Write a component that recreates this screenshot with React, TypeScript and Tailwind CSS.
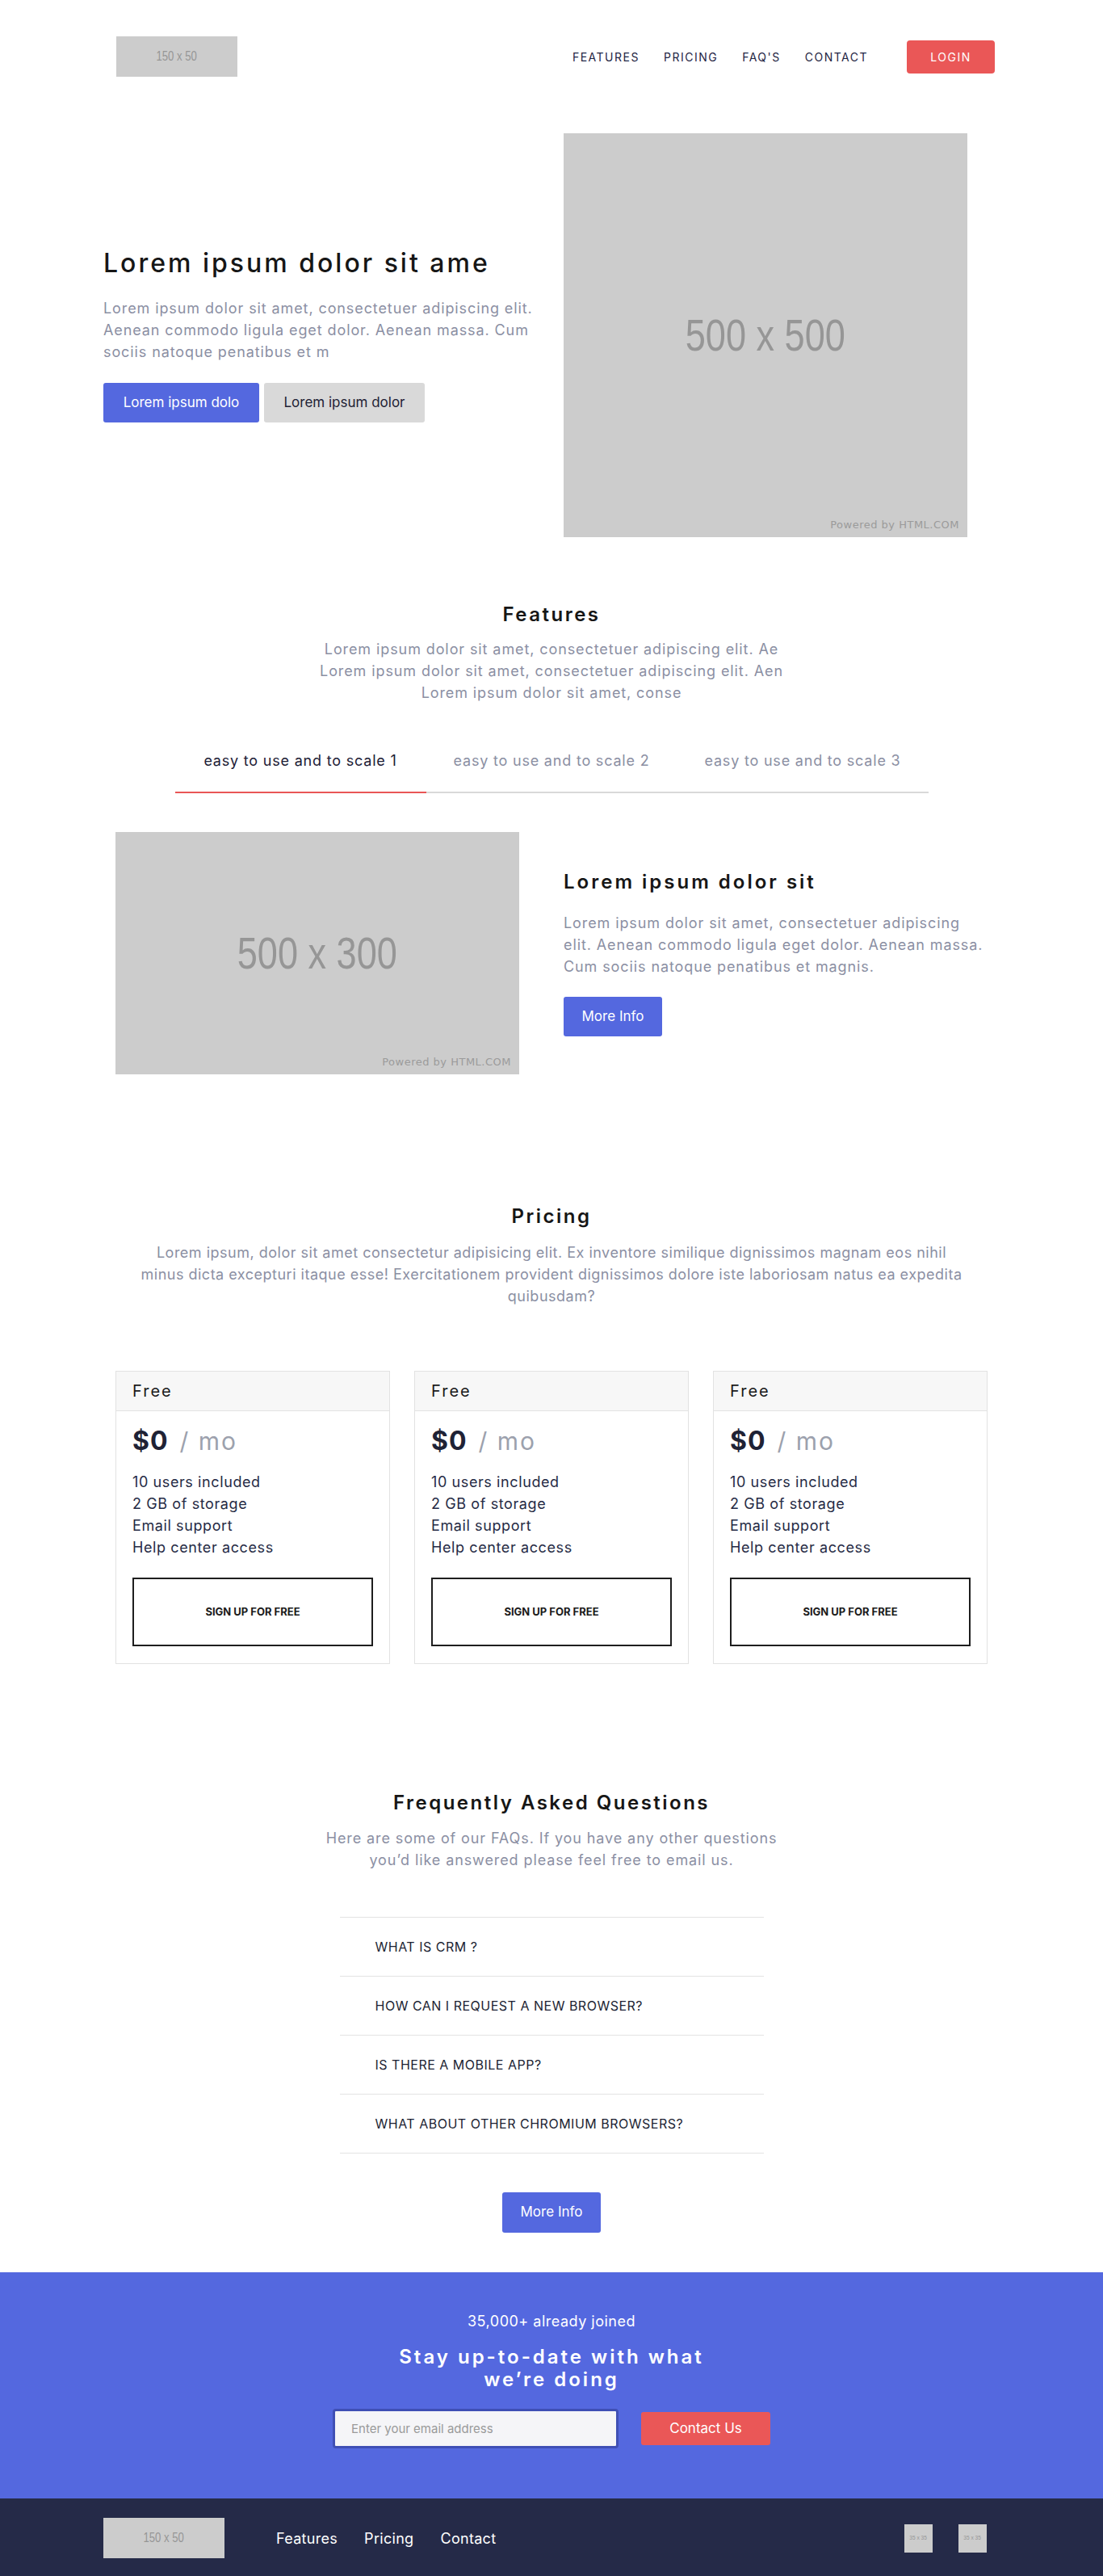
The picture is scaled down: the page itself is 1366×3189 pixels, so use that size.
import React from "react";

const Ph = ({ className, label, big, powered }: { className: string; label: string; big?: string; powered?: boolean }) => (
  <div className={`relative bg-[#cccccc] flex items-center justify-center text-[#969696] font-['Liberation_Sans',Arial,sans-serif] shrink-0 ${className}`}>
    <span className={`inline-block scale-x-[0.82] ${big}`}>{label}</span>
    {powered && (
      <span className="absolute right-[10px] bottom-[6px] text-[13px] tracking-[0.5px] text-[#9b9b9b] font-['DejaVu_Sans',sans-serif]">Powered by HTML.COM</span>
    )}
  </div>
);

export default function App() {
  const tabs = ["easy to use and to scale 1", "easy to use and to scale 2", "easy to use and to scale 3"];
  const faqs = ["WHAT IS CRM ?", "HOW CAN I REQUEST A NEW BROWSER?", "IS THERE A MOBILE APP?", "WHAT ABOUT OTHER CHROMIUM BROWSERS?"];
  return (
    <div className="bg-white font-['Inter',sans-serif] text-[#1f2235]">
      {/* Nav */}
      <header className="w-[1110px] mx-auto pl-4 pr-[6px] pt-[45px] flex items-center justify-between">
        <Ph className="w-[150px] h-[50px]" label="150 x 50" big="text-[16px]" />
        <nav className="flex items-center">
          <ul className="flex gap-[30px] text-[14px] tracking-[1.5px] text-[#1f2544]">
            <li>FEATURES</li>
            <li>PRICING</li>
            <li>FAQ'S</li>
            <li>CONTACT</li>
          </ul>
          <button className="ml-[48px] w-[109px] h-[41px] rounded-[4px] bg-[#ea5757] text-white text-[14px] tracking-[1.5px]">LOGIN</button>
        </nav>
      </header>

      {/* Hero */}
      <section className="w-[1110px] mx-auto mt-[70px] flex items-center gap-[30px]">
        <div className="w-[540px]">
          <h1 className="text-[32px] leading-[38px] font-medium tracking-[3px] text-[#161616]">Lorem ipsum dolor sit ame</h1>
          <p className="mt-[23px] text-[18px] leading-[27px] tracking-[0.9px] text-[#8b8fa3]">
            Lorem ipsum dolor sit amet, consectetuer adipiscing elit. Aenean commodo ligula eget dolor. Aenean massa. Cum sociis natoque penatibus et m
          </p>
          <div className="mt-[25px] flex gap-[6px]">
            <button className="h-[49px] w-[193px] rounded-[3px] bg-[#5468df] text-white text-[17px]">Lorem ipsum dolo</button>
            <button className="h-[49px] w-[199px] rounded-[3px] bg-[#d9d9d9] text-[#1f2235] text-[17px]">Lorem ipsum dolor</button>
          </div>
        </div>
        <Ph className="w-[500px] h-[500px]" label="500 x 500" big="text-[55px]" powered />
      </section>

      {/* Features */}
      <section className="mt-[81px] text-center">
        <h2 className="text-[24px] leading-[29px] font-semibold tracking-[2.5px] text-[#161616]">Features</h2>
        <p className="mt-[15px] mx-auto w-[580px] text-[18px] leading-[27px] tracking-[0.9px] text-[#8b8fa3]">
          Lorem ipsum dolor sit amet, consectetuer adipiscing elit. Ae Lorem ipsum dolor sit amet, consectetuer adipiscing elit. Aen Lorem ipsum dolor sit amet, conse
        </p>
        <div className="mt-[57px] mx-auto w-[933px] flex">
          {tabs.map((t, i) => (
            <div
              key={t}
              className={`flex-1 pb-[25px] text-[18px] leading-[27px] tracking-[0.8px] border-b-2 ${i === 0 ? "border-[#e95656] text-[#1d2036]" : "border-[#d9d9d9] text-[#8b8fa3]"}`}
            >
              {t}
            </div>
          ))}
        </div>
      </section>

      <section className="w-[1080px] mx-auto mt-[48px] flex items-center gap-[55px]">
        <Ph className="w-[500px] h-[300px]" label="500 x 300" big="text-[55px]" powered />
        <div className="flex-1">
          <h3 className="text-[24px] leading-[29px] font-semibold tracking-[3px] text-[#161616]">Lorem ipsum dolor sit</h3>
          <p className="mt-[23px] text-[18px] leading-[27px] tracking-[0.9px] text-[#8b8fa3]">
            Lorem ipsum dolor sit amet, consectetuer adipiscing elit. Aenean commodo ligula eget dolor. Aenean massa. Cum sociis natoque penatibus et magnis.
          </p>
          <button className="mt-[24px] h-[49px] w-[122px] rounded-[3px] bg-[#5468df] text-white text-[17px]">More Info</button>
        </div>
      </section>

      {/* Pricing */}
      <section className="w-[1080px] mx-auto mt-[161px] text-center">
        <h2 className="text-[24px] leading-[29px] font-semibold tracking-[2.5px] text-[#161616]">Pricing</h2>
        <p className="mt-[17px] mx-auto w-[1080px] text-[18px] leading-[27px] tracking-[0.5px] text-[#8b8fa3]">
          Lorem ipsum, dolor sit amet consectetur adipisicing elit. Ex inventore similique dignissimos magnam eos nihil
          <br />
          minus dicta excepturi itaque esse! Exercitationem provident dignissimos dolore iste laboriosam natus ea expedita quibusdam?
        </p>
        <div className="mt-[79px] grid grid-cols-3 gap-[30px] text-left">
          {[0, 1, 2].map((k) => (
            <div key={k} className="border border-[#e2e2e2]">
              <div className="h-[49px] bg-[#f7f7f7] border-b border-[#e2e2e2] px-5 flex items-center text-[20px] tracking-[2px] text-[#1a1a1a]">Free</div>
              <div className="px-5 pt-[18px] pb-[21px]">
                <div className="flex items-baseline leading-[38px]">
                  <span className="text-[32px] font-bold tracking-[1px] text-[#1f2235]">$0</span>
                  <span className="ml-[14px] text-[30px] tracking-[2px] text-[#9ca1ad]">/ mo</span>
                </div>
                <ul className="mt-[18px] text-[18px] leading-[27px] tracking-[0.6px] text-[#262b45]">
                  <li>10 users included</li>
                  <li>2 GB of storage</li>
                  <li>Email support</li>
                  <li>Help center access</li>
                </ul>
                <button className="mt-[24px] w-[298px] h-[85px] border-2 border-[#1e1e1e] text-[13px] font-bold text-[#1a1a1a]">SIGN UP FOR FREE</button>
              </div>
            </div>
          ))}
        </div>
      </section>

      {/* FAQ */}
      <section className="mt-[157px] text-center">
        <h2 className="text-[24px] leading-[29px] font-semibold tracking-[2.5px] text-[#161616]">Frequently Asked Questions</h2>
        <p className="mt-[16px] mx-auto w-[580px] text-[18px] leading-[27px] tracking-[0.9px] text-[#8b8fa3]">
          Here are some of our FAQs. If you have any other questions you’d like answered please feel free to email us.
        </p>
        <ul className="mt-[57px] mx-auto w-[525px] text-left border-b border-[#e3e3e3]">
          {faqs.map((q) => (
            <li key={q} className="h-[73px] border-t border-[#e3e3e3] pl-[44px] flex items-center text-[16px] tracking-[0.5px] text-[#1c1f33]">{q}</li>
          ))}
        </ul>
        <button className="mt-[48px] h-[50px] w-[122px] rounded-[3px] bg-[#5468df] text-white text-[17px]">More Info</button>
      </section>

      {/* Newsletter */}
      <section className="mt-[49px] bg-[#5468df] pt-[47px] pb-[62px] text-center text-white">
        <p className="text-[18px] leading-[27px] tracking-[0.5px]">35,000+ already joined</p>
        <h2 className="mt-[17px] mx-auto w-[420px] text-[24px] leading-[28px] font-semibold tracking-[3px]">Stay up-to-date with what we’re doing</h2>
        <div className="mt-[22px] flex items-center justify-center gap-[28px]">
          <input
            className="w-[354px] h-[49px] rounded-[4px] border-[3px] border-[#3f4fb5] bg-[#f5f5f8] px-[20px] text-[15px] text-[#333] placeholder:text-[#9a9a9a] outline-none"
            placeholder="Enter your email address"
          />
          <button className="w-[160px] h-[41px] rounded-[3px] bg-[#ea5757] text-white text-[17px]">Contact Us</button>
        </div>
      </section>

      {/* Footer */}
      <footer className="bg-[#252a48]">
        <div className="w-[1110px] mx-auto h-[98px] flex items-center pr-4">
          <Ph className="w-[150px] h-[50px]" label="150 x 50" big="text-[16px]" />
          <ul className="ml-[64px] flex gap-[33px] text-[18px] tracking-[0.3px] text-white">
            <li>Features</li>
            <li>Pricing</li>
            <li>Contact</li>
          </ul>
          <div className="ml-auto flex gap-[32px]">
            <Ph className="w-[35px] h-[35px]" label="35 x 35" big="text-[8px]" />
            <Ph className="w-[35px] h-[35px]" label="35 x 35" big="text-[8px]" />
          </div>
        </div>
      </footer>
    </div>
  );
}
